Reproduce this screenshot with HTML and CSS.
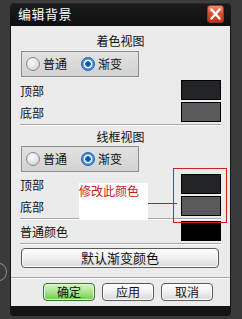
FILE: index.html
```html
<!DOCTYPE html>
<html lang="zh">
<head>
    <meta charset="UTF-8">
    <title>编辑背景</title>
    <link rel="stylesheet" href="styles.css">
</head>
<body>
    <div class="desk">
        <div class="arc"></div>
        <div class="window">
            <header class="titlebar">
                <span class="title">编辑背景</span>
                <span class="close">
                    <svg width="17" height="18" viewBox="0 0 17 18">
                        <path d="M4.5 4.5 L12.5 13.5 M12.5 4.5 L4.5 13.5" stroke="#fff" stroke-width="2.4" stroke-linecap="round"/>
                    </svg>
                </span>
            </header>

            <main class="client">
                <section class="group">
                    <div class="group-title">着色视图</div>
                    <div class="radios">
                        <span class="radio"><i class="dot"></i>普通</span>
                        <span class="radio on"><i class="dot"></i>渐变</span>
                    </div>
                    <div class="row first"><span>顶部</span><span class="swatch dark"></span></div>
                    <div class="row"><span>底部</span><span class="swatch mid"></span></div>
                </section>
                <hr class="sep inset">

                <section class="group">
                    <div class="group-title second">线框视图</div>
                    <div class="radios tight">
                        <span class="radio"><i class="dot"></i>普通</span>
                        <span class="radio on"><i class="dot"></i>渐变</span>
                    </div>
                    <div class="row"><span>顶部</span><span class="swatch dark"></span></div>
                    <div class="row"><span>底部</span><span class="swatch mid"></span></div>
                </section>
                <hr class="sep inset">

                <div class="row plain"><span>普通颜色</span><span class="swatch black"></span></div>
                <hr class="sep inset">

                <button class="btn wide">默认渐变颜色</button>
                <hr class="sep full">

                <div class="actions">
                    <button class="btn ok">确定</button>
                    <button class="btn">应用</button>
                    <button class="btn">取消</button>
                </div>

                <!-- annotation drawn over the dialog -->
                <div class="note">修改此颜色</div>
                <div class="note-line"></div>
                <div class="note-box"></div>
            </main>
        </div>
    </div>
</body>
</html>
```

FILE: styles.css
```css
body {
    margin: 0;
    background-color: #3a3a3a;
    font-family: "Noto Sans CJK SC", sans-serif;
    font-size: 12px;
    color: #111;
}
.desk {
    position: relative;
    width: 242px;
    height: 319px;
    overflow: hidden;
    padding-top: 2px;
    box-sizing: border-box;
}
.arc {
    position: absolute;
    left: -9px;
    top: 263px;
    width: 14px;
    height: 16px;
    border: 1px solid #8a8a8a;
    border-radius: 50%;
}
.window {
    margin-left: 10px;
    width: 221px;
    background-color: #141414;
    border-radius: 6px 6px 4px 4px;
    padding-bottom: 10px;
}
.titlebar {
    height: 24px;
    display: flex;
    align-items: center;
    justify-content: space-between;
    padding: 0 7px 0 8px;
    border-radius: 6px 6px 0 0;
    background: linear-gradient(#4a4a4a 0, #1c1c1c 2px, #0e0e0e 100%);
}
.title {
    color: #fff;
    font-size: 13px;
    line-height: 16px;
    letter-spacing: 0.5px;
}
.close {
    display: flex;
    width: 17px;
    height: 18px;
    border: 1px solid #8a3a2a;
    border-radius: 3px;
    box-sizing: border-box;
    background: linear-gradient(#f08a70, #d84a2c 50%, #c03418);
    align-items: center;
    justify-content: center;
}
.close svg {
    margin: -1px;
}
.client {
    position: relative;
    margin-left: 1px;
    width: 219px;
    background-color: #ebebeb;
    padding: 7px 0 5px;
}
.group-title {
    text-align: center;
    line-height: 16px;
    font-size: 12px;
}
.group-title.second {
    margin-top: 3px;
}
.radios {
    margin: 2px 0 0 10px;
    width: 118px;
    height: 26px;
    box-sizing: border-box;
    border: 1px solid #8e8e8e;
    background: linear-gradient(#e2e2e2, #d2d2d2);
    display: flex;
    align-items: center;
    padding-left: 4px;
    gap: 14px;
}
.radios.tight {
    margin-top: 1px;
}
.radio {
    display: flex;
    align-items: center;
    gap: 3px;
    line-height: 14px;
}
.dot {
    width: 14px;
    height: 14px;
    box-sizing: border-box;
    border-radius: 50%;
    border: 1px solid #8a8a8a;
    background: radial-gradient(circle at 40% 35%, #ffffff, #d8d8d8 70%, #bcbcbc);
}
.radio.on .dot {
    border-color: #1c5fae;
    background: radial-gradient(circle, #0c4a9c 0, #1a62b8 2.5px, #ffffff 3.2px, #e8f2ff 4px, #4a9ae6 4.8px, #2a78cc 7px);
}
.row {
    display: flex;
    justify-content: space-between;
    align-items: center;
    height: 20px;
    margin-top: 2px;
    padding: 0 9px;
}
.row.first {
    margin-top: 3px;
}
.row.plain {
    margin-top: 1px;
}
.swatch {
    width: 40px;
    height: 20px;
    box-sizing: border-box;
    border: 1px solid #000;
}
.swatch.dark {
    background-color: #232427;
}
.swatch.mid {
    background-color: #5a5a5c;
}
.swatch.black {
    background-color: #000;
}
.sep {
    border: none;
    height: 0;
    border-top: 1px solid #a8a8a8;
    border-bottom: 1px solid #fbfbfb;
    margin: 2px 0 0;
}
.sep.inset {
    margin-left: 9px;
    margin-right: 9px;
}
.sep.full {
    margin-top: 9px;
}
.btn {
    font-family: "Noto Sans CJK SC", sans-serif;
    font-size: 12px;
    line-height: 14px;
    color: #111;
    border: 1px solid #5a5a5a;
    border-radius: 4px;
    background: linear-gradient(#ffffff, #f0f0f0 50%, #d8d8d8);
    padding: 0;
    box-shadow: inset 0 0 0 1px #fdfdfd;
}
.btn.wide {
    display: block;
    margin: 3px 0 0 10px;
    width: 198px;
    height: 20px;
    font-size: 13px;
}
.actions {
    display: flex;
    justify-content: flex-end;
    gap: 7px;
    padding-right: 17px;
    margin-top: 4px;
}
.actions .btn {
    width: 52px;
    height: 18px;
}
.btn.ok {
    border-color: #3f6f32;
    background: linear-gradient(#d6f6c4, #a8e48a 50%, #6cc84a);
    box-shadow: inset 0 0 0 1px #e4fbd8;
}
.note {
    position: absolute;
    left: 68px;
    top: 157px;
    width: 69px;
    height: 37px;
    background-color: #fff;
    color: #c81818;
    font-size: 12px;
    line-height: 14px;
    padding-top: 1px;
    box-sizing: border-box;
}
.note-line {
    position: absolute;
    left: 137px;
    top: 177px;
    width: 29px;
    height: 1px;
    background-color: #c81818;
}
.note-box {
    position: absolute;
    left: 162px;
    top: 142px;
    width: 54px;
    height: 55px;
    box-sizing: border-box;
    border: 1px solid #d01c1c;
}
```
